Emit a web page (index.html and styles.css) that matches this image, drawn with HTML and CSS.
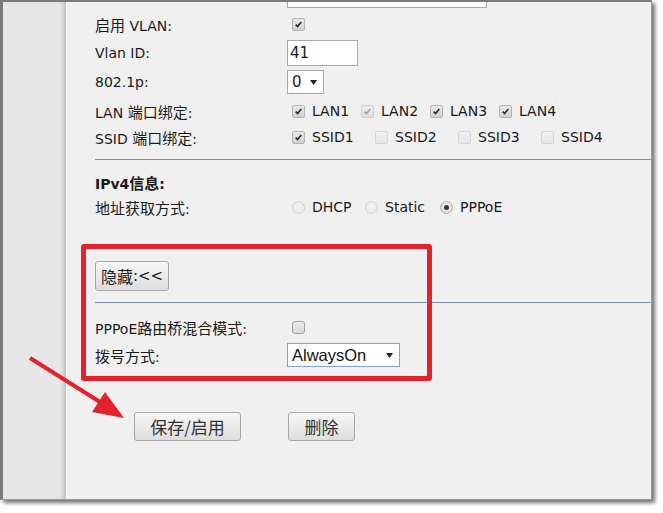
FILE: index.html
```html
<!DOCTYPE html>
<html lang="zh-CN">
<head>
<meta charset="utf-8">
<title>WAN 设置</title>
<link rel="stylesheet" href="styles.css">
</head>
<body>
<div class="frame">
  <aside class="side"></aside>
  <main class="content">
    <div class="row row-top"><span class="lbl"></span><span class="txt txt-wide"></span></div>
    <div class="row h32"><span class="lbl"><span class="zh">启用</span> VLAN:</span><span class="cb on"><svg viewBox="0 0 13 13"><path d="M3.2 6.6 L5.4 9 L9.8 3.6"/></svg></span></div>
    <div class="row h26"><span class="lbl">Vlan ID:</span><span class="txt txt-id">41</span></div>
    <div class="row h32"><span class="lbl">802.1p:</span><span class="sel sel-small"><span>0</span><svg class="caret" viewBox="0 0 7 5"><path d="M0 0 H7 L3.5 5 Z"/></svg></span></div>
    <div class="row h26"><span class="lbl">LAN <span class="zh">端口绑定</span>:</span>
      <span class="opts">
        <span class="opt lan"><span class="cb on"><svg viewBox="0 0 13 13"><path d="M3.2 6.6 L5.4 9 L9.8 3.6"/></svg></span>LAN1</span>
        <span class="opt lan"><span class="cb on dis"><svg viewBox="0 0 13 13"><path d="M3.2 6.6 L5.4 9 L9.8 3.6"/></svg></span>LAN2</span>
        <span class="opt lan"><span class="cb on"><svg viewBox="0 0 13 13"><path d="M3.2 6.6 L5.4 9 L9.8 3.6"/></svg></span>LAN3</span>
        <span class="opt lan"><span class="cb on"><svg viewBox="0 0 13 13"><path d="M3.2 6.6 L5.4 9 L9.8 3.6"/></svg></span>LAN4</span>
      </span>
    </div>
    <div class="row h26"><span class="lbl">SSID&nbsp;<span class="zh">端口绑定</span>:</span>
      <span class="opts">
        <span class="opt ssid"><span class="cb on"><svg viewBox="0 0 13 13"><path d="M3.2 6.6 L5.4 9 L9.8 3.6"/></svg></span>SSID1</span>
        <span class="opt ssid"><span class="cb off"></span>SSID2</span>
        <span class="opt ssid"><span class="cb off"></span>SSID3</span>
        <span class="opt ssid"><span class="cb off"></span>SSID4</span>
      </span>
    </div>
    <hr class="sep sep-1">
    <div class="row h24 ipv4"><span class="lbl bold">IPv4<span class="zh">信息</span>:</span></div>
    <div class="row h26"><span class="lbl"><span class="zh">地址获取方式</span>:</span>
      <span class="opts">
        <span class="opt rad-dhcp"><span class="radio"></span>DHCP</span>
        <span class="opt rad-static"><span class="radio"></span>Static</span>
        <span class="opt"><span class="radio sel-on"><span class="dot"></span></span>PPPoE</span>
      </span>
    </div>
    <div class="row h30 toggle-row"><span class="btn btn-hide"><span class="zh">隐藏</span>:&lt;&lt;</span></div>
    <hr class="sep sep-2">
    <div class="row h26 pppoe-row"><span class="lbl">PPPoE<span class="zh">路由桥混合模式</span>:</span><span class="cb plain"></span></div>
    <div class="row h30"><span class="lbl"><span class="zh">拨号方式</span>:</span><span class="sel sel-dial"><span>AlwaysOn</span><svg class="caret" viewBox="0 0 7 5"><path d="M0 0 H7 L3.5 5 Z"/></svg></span></div>
    <div class="actions">
      <span class="btn btn-big btn-save">保存/启用</span>
      <span class="btn btn-big btn-del">删除</span>
    </div>
  </main>
  <div class="redbox"></div>
  <svg class="arrow" viewBox="0 0 651 502" width="651" height="502">
    <line x1="27" y1="356" x2="97" y2="400"/>
    <polygon points="121,416 89,410 102,390"/>
  </svg>
</div>
</body>
</html>
```

FILE: styles.css
```css
* { box-sizing: border-box; }
html, body { margin: 0; background: #fff; }
body {
  width: 663px;
  height: 513px;
  overflow: hidden;
  font-family: "DejaVu Sans", "Noto Sans CJK SC", sans-serif;
  font-size: 14px;
  color: #1a1a1a;
}
.zh { font-family: "Noto Sans CJK SC", sans-serif; font-size: 15px; }
.bold { font-weight: bold; }

.frame {
  position: relative;
  display: flex;
  width: 652px;
  height: 500px;
  border-left: 3px solid #7b7b7b;
  border-top: 2px solid #7b7b7b;
  border-right: 1px solid #9a9a9a;
  border-bottom: 1px solid #9a9a9a;
  box-shadow: 3px 3px 4px rgba(0, 0, 0, 0.55);
  background: #f0f0f0;
  overflow: hidden;
}
.side {
  flex: none;
  width: 64px;
  background: #e7e7e7;
  border-right: 1px solid #fbfbfb;
  box-shadow: inset -5px 0 5px -3px rgba(0, 0, 0, 0.22);
}
.content {
  flex: 1;
  display: flex;
  flex-direction: column;
  padding-left: 28px;
  background: #f0f0f0;
}
.row { display: flex; align-items: center; flex: none; }
.h24 { height: 24px; }
.h26 { height: 26px; }
.h30 { height: 30px; }
.h32 { height: 32px; }
.row-top { margin-top: -18px; height: 24px; }
.lbl { flex: none; width: 192px; white-space: nowrap; }

.txt {
  display: block;
  background: #fff;
  border: 1px solid #a9a9a9;
  font-size: 15px;
  line-height: 24px;
  padding-left: 2px;
}
.txt-wide { width: 200px; height: 24px; }
.txt-id { width: 71px; height: 26px; }

.sel {
  display: flex;
  align-items: center;
  justify-content: space-between;
  background: #fff;
  border: 1px solid #a9a9a9;
  height: 24px;
  padding: 0 6px 0 4px;
}
.sel-small { width: 37px; font-size: 15px; }
.sel-dial { width: 113px; border-color: #7ea3d6; font-family: "Liberation Sans", sans-serif; font-size: 16.5px; color: #111; }
.caret { width: 7px; height: 5px; fill: #222; }

.cb {
  flex: none;
  display: block;
  width: 13px;
  height: 13px;
  margin-left: 5px;
  border: 1px solid #b4b4b4;
  border-radius: 2px;
  background: linear-gradient(#e8e8e8, #d2d2d2);
}
.cb svg { display: block; width: 11px; height: 11px; fill: none; stroke: #2c2c2c; stroke-width: 1.9; }
.cb.dis svg { stroke: #a0a0a0; }
.cb.dis { background: linear-gradient(#ececec, #e0e0e0); border-color: #cfcfcf; }
.cb.off { background: linear-gradient(#f1f1f1, #e6e6e6); border-color: #d6d6d6; }
.cb.plain { border-color: #9f9f9f; background: linear-gradient(#ececec, #d9d9d9); border-radius: 3px; }

.opts { display: flex; align-items: center; }
.opt { display: flex; align-items: center; flex: none; white-space: nowrap; }
.opt .cb { margin-left: 0; margin-right: 7px; }
.opts .opt:first-child .cb, .opts .opt:first-child .radio { margin-left: 5px; }
.lan { width: 69px; }
.opt.lan:first-child { width: 74px; }
.ssid { width: 83px; }
.opt.ssid:first-child { width: 88px; }

.radio {
  flex: none;
  display: block;
  width: 13px;
  height: 13px;
  margin-right: 7px;
  border-radius: 50%;
  border: 1px solid #d2d2d2;
  background: radial-gradient(circle at 50% 40%, #f6f6f6, #e2e2e2);
  position: relative;
}
.radio.sel-on { border-color: #b0b0b0; background: radial-gradient(circle at 50% 40%, #f0f0f0, #d6d6d6); display: flex; align-items: center; justify-content: center; }
.dot { display: block; width: 5px; height: 5px; border-radius: 50%; background: #3a3a3a; }
.opts .rad-dhcp { width: 78px; }
.rad-static { width: 75px; }

.sep {
  flex: none;
  margin: 0;
  border: 0;
  border-top: 1px solid #7d8fa2;
  height: 0;
}
.sep-1 { margin-top: 9px; }
.ipv4 { margin-top: 10px; }
.toggle-row { margin-top: 41px; }
.sep-2 { margin-top: 11px; }
.pppoe-row { margin-top: 11px; }

.btn {
  display: flex;
  align-items: center;
  justify-content: center;
  border: 1px solid #a8a8a8;
  border-radius: 3px;
  background: linear-gradient(#f7f7f7, #dddddd);
  color: #222;
  white-space: nowrap;
}
.btn-hide { width: 74px; height: 30px; font-size: 15px; }
.btn-hide .zh { font-size: 16px; }

.actions { display: flex; margin-top: 42px; padding-left: 39px; }
.btn-big { height: 29px; font-family: "Noto Sans CJK SC", sans-serif; font-size: 17px; color: #333; }
.btn-save { width: 107px; }
.btn-del { width: 67px; margin-left: 47px; }

.redbox {
  position: absolute;
  left: 78px;
  top: 242px;
  width: 351px;
  height: 137px;
  border: 5px solid #e3222c;
  border-radius: 3px;
}
.arrow { position: absolute; left: 0; top: 0; pointer-events: none; }
.arrow line { stroke: #e3222c; stroke-width: 4; }
.arrow polygon { fill: #e3222c; }
```
